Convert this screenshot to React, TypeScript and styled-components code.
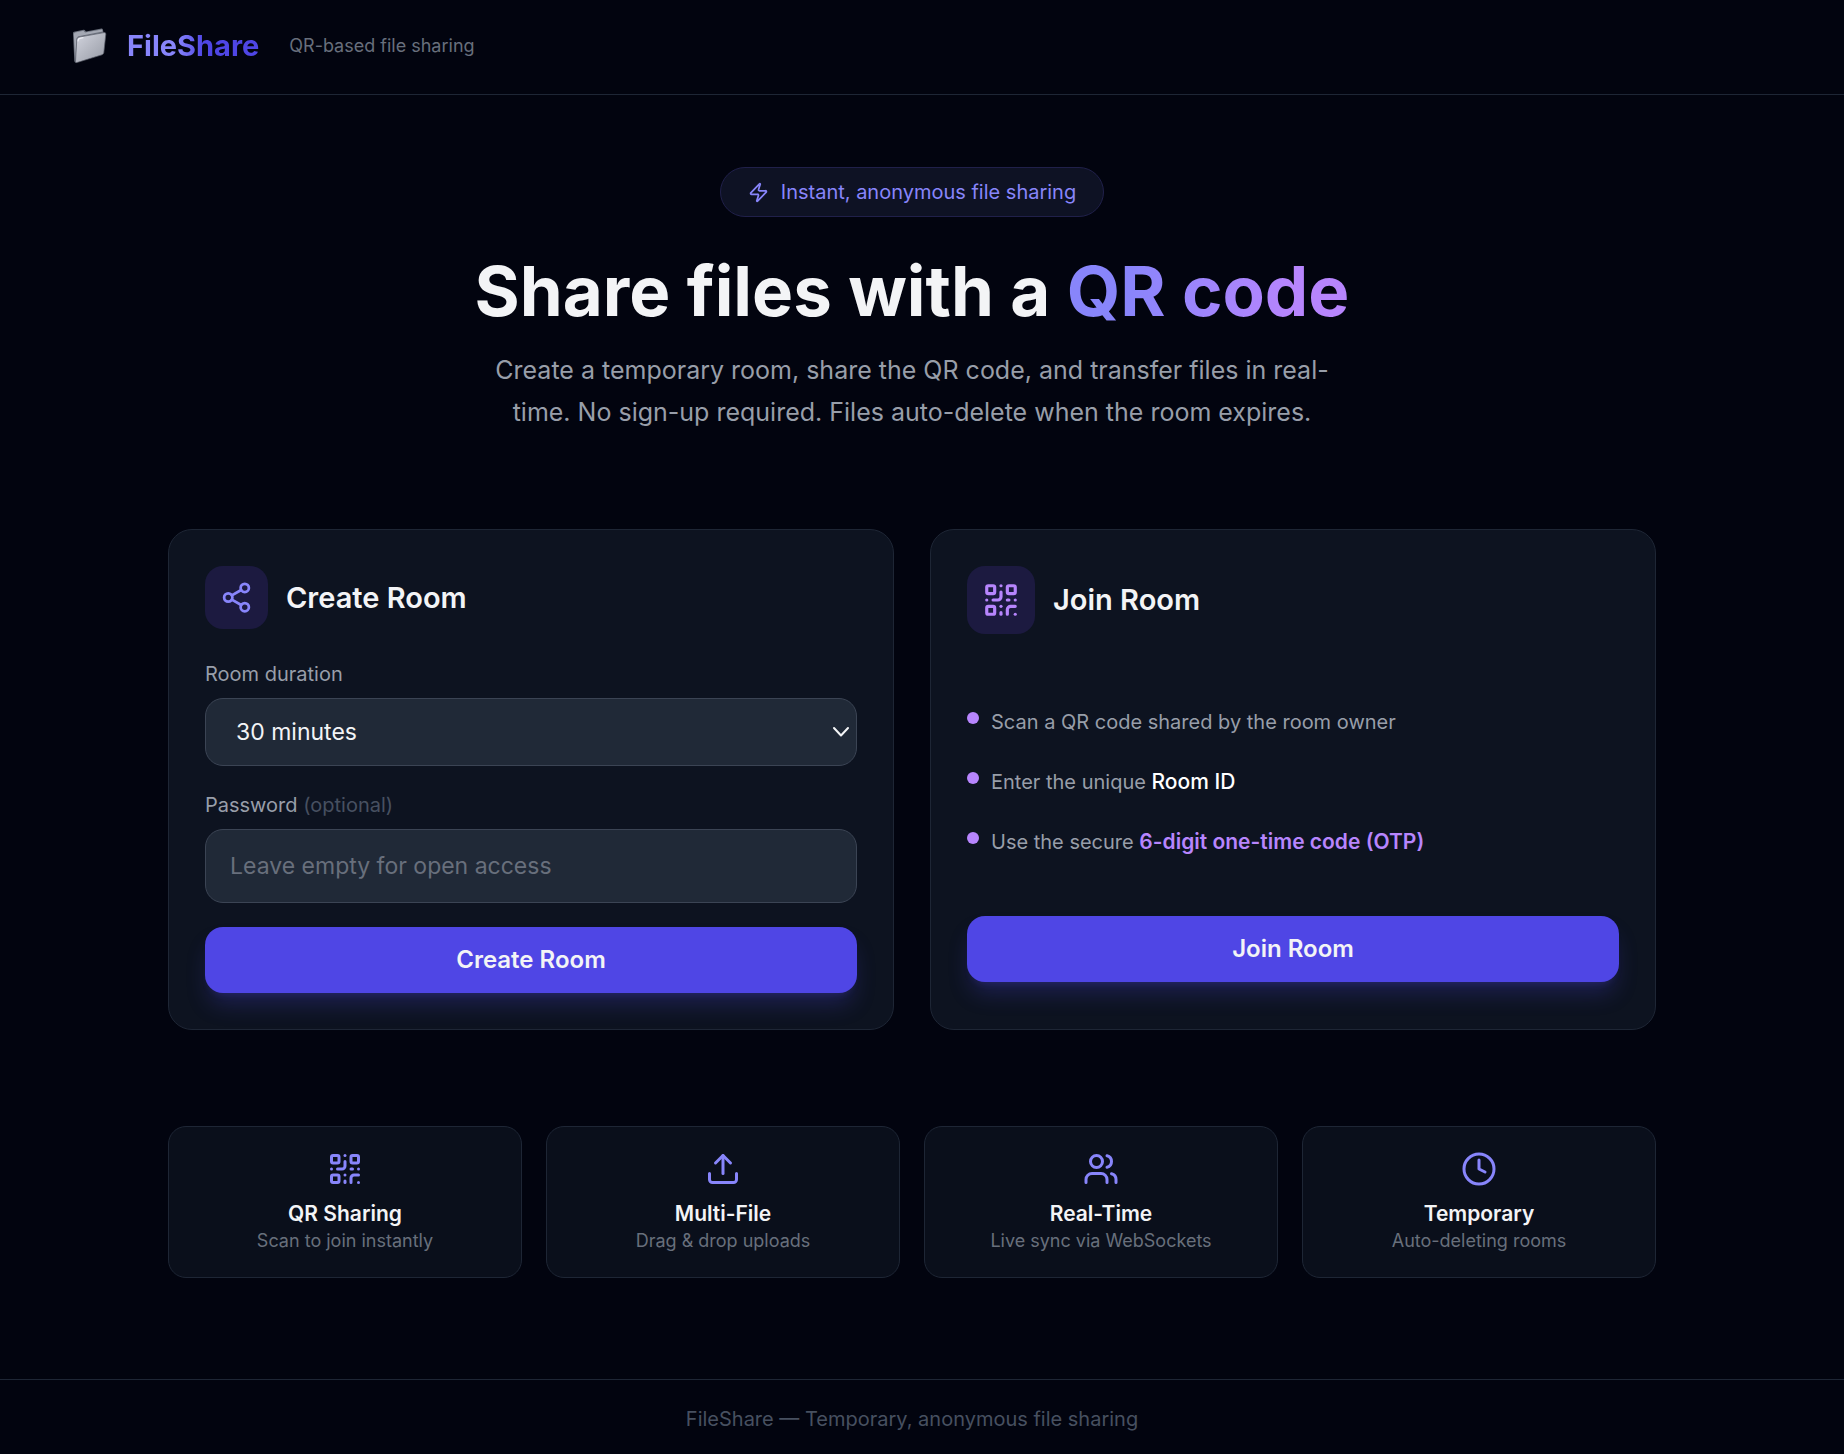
import React from "react";
import styled, { createGlobalStyle } from "styled-components";
import { Clock, QrCode, Share2, Upload, Users, Zap } from "lucide-react";

const color = {
  page: "#02040f",
  card: "#0d1320",
  line: "#1e2635",
  field: "#202937",
  fieldLine: "#3b4454",
  text: "#f3f4f6",
  muted: "#989ea9",
  dim: "#686f7c",
  faint: "#475060",
  indigo: "#8885fb",
  purple: "#b785fd",
  primary: "#4f46e5",
  tint: "#1c1a40",
};

const GlobalStyle = createGlobalStyle`
  *, *::before, *::after { box-sizing: border-box; }
  body {
    margin: 0;
    background: ${color.page};
    color: ${color.text};
    font-family: Inter, "Liberation Sans", sans-serif;
    font-size: 20px;
    line-height: 30px;
  }
  h1, h2, h3, p, ul { margin: 0; padding: 0; }
  button, input, select { font: inherit; }
`;

const Page = styled.div`
  min-height: 100vh;
  display: flex;
  flex-direction: column;
`;

const Header = styled.header`
  display: flex;
  align-items: center;
  padding: 24px 72px 26px;
  border-bottom: 1px solid ${color.line};
`;

const Brand = styled.a`
  display: flex;
  align-items: center;
  gap: 20px;
  color: inherit;
  text-decoration: none;
`;

const BrandName = styled.span`
  font-size: 29px;
  line-height: 44px;
  font-weight: 700;
  background: linear-gradient(to right, ${color.indigo} 38%, ${color.primary} 58%);
  background-clip: text;
  color: transparent;
`;

const Tagline = styled.span`
  margin-left: 30px;
  font-size: 18px;
  color: ${color.dim};
`;

const Main = styled.main`
  flex: 1;
  width: 100%;
  padding: 72px 44px 96px 24px;
`;

const Hero = styled.section`
  display: flex;
  flex-direction: column;
  align-items: center;
  text-align: center;
`;

const Badge = styled.div`
  display: flex;
  align-items: center;
  gap: 12px;
  height: 50px;
  padding: 0 27px;
  border: 1px solid #20204a;
  border-radius: 25px;
  background: #0e1224;
  color: ${color.indigo};
`;

const Headline = styled.h1`
  margin-top: 36px;
  font-size: 69px;
  line-height: 76px;
  font-weight: 700;
`;

const Accent = styled.span`
  background: linear-gradient(to right, ${color.indigo} 20%, ${color.purple} 80%);
  background-clip: text;
  color: transparent;
`;

const Lead = styled.p`
  margin-top: 20px;
  max-width: 864px;
  font-size: 25px;
  line-height: 42px;
  color: ${color.muted};
`;

const Container = styled.div`
  max-width: 1488px;
  margin: 96px auto 0;
`;

const Cards = styled.div`
  display: grid;
  grid-template-columns: repeat(auto-fit, minmax(420px, 1fr));
  gap: 36px;
`;

const Card = styled.section`
  padding: 36px;
  border: 1px solid ${color.line};
  border-radius: 24px;
  background: ${color.card};
`;

const CardHead = styled.div`
  display: flex;
  align-items: center;
  gap: 18px;
`;

const IconTile = styled.div<{ $tone: string }>`
  display: flex;
  padding: 15px;
  border-radius: 18px;
  background: ${color.tint};
  color: ${(p) => p.$tone};
`;

const CardTitle = styled.h2`
  font-size: 29px;
  line-height: 44px;
  font-weight: 600;
`;

const Form = styled.form`
  display: flex;
  flex-direction: column;
  gap: 24px;
  margin-top: 30px;
`;

const Field = styled.div`
  display: flex;
  flex-direction: column;
  gap: 9px;
`;

const Label = styled.label`
  color: ${color.muted};
`;

const Optional = styled.span`
  color: ${color.faint};
`;

const SelectWrap = styled.div`
  position: relative;

  svg {
    position: absolute;
    right: 8px;
    top: 0;
    height: 100%;
    pointer-events: none;
  }
`;

const Select = styled.select`
  display: block;
  appearance: none;
  width: 100%;
  height: 68px;
  padding: 0 30px;
  border: 1px solid ${color.fieldLine};
  border-radius: 18px;
  background: ${color.field};
  color: ${color.text};
  font-size: 23px;
`;

const Input = styled.input`
  width: 100%;
  height: 74px;
  padding: 0 24px;
  border: 1px solid ${color.fieldLine};
  border-radius: 18px;
  background: ${color.field};
  color: ${color.text};
  font-size: 23px;

  &::placeholder {
    color: ${color.dim};
    opacity: 1;
  }
`;

const PrimaryButton = styled.button`
  width: 100%;
  height: 66px;
  border: 0;
  border-radius: 18px;
  background: ${color.primary};
  color: ${color.text};
  font-size: 24px;
  font-weight: 600;
  cursor: pointer;
  box-shadow:
    0 15px 22px -4px rgba(79, 70, 229, 0.25),
    0 6px 9px -6px rgba(79, 70, 229, 0.25);
`;

const Steps = styled.ul`
  display: flex;
  flex-direction: column;
  gap: 30px;
  margin: 73px 0 59px;
  list-style: none;
  color: ${color.muted};
`;

const Step = styled.li`
  display: flex;
  align-items: flex-start;
  gap: 12px;

  &::before {
    content: "";
    flex: none;
    width: 12px;
    height: 12px;
    margin-top: 5px;
    border-radius: 50%;
    background: ${color.purple};
  }
`;

const Strong = styled.strong<{ $tone: string; $weight: number }>`
  color: ${(p) => p.$tone};
  font-size: 21px;
  font-weight: ${(p) => p.$weight};
`;

const Features = styled.div`
  display: grid;
  grid-template-columns: repeat(auto-fit, minmax(260px, 1fr));
  gap: 24px;
  margin-top: 96px;
`;

const Feature = styled.article`
  display: flex;
  flex-direction: column;
  align-items: center;
  padding: 24px;
  border: 1px solid ${color.line};
  border-radius: 18px;
  background: #0a0f1b;
  text-align: center;

  svg {
    color: ${color.indigo};
  }
`;

const FeatureTitle = styled.h3`
  margin-top: 12px;
  font-size: 21px;
  line-height: 30px;
  font-weight: 600;
`;

const FeatureText = styled.p`
  font-size: 18px;
  line-height: 24px;
  color: ${color.dim};
`;

const Footer = styled.footer`
  padding: 24px 44px 20px 24px;
  border-top: 1px solid ${color.line};
  text-align: center;
  color: ${color.faint};
`;

const FolderIcon = () => (
  <svg width="35" height="36" viewBox="0 0 35 36" aria-hidden="true">
    <defs>
      <linearGradient id="folderFront" x1="0" y1="0" x2="1" y2="1">
        <stop offset="0" stopColor="#d3d5df" />
        <stop offset="0.5" stopColor="#b4b7c1" />
        <stop offset="1" stopColor="#969aa5" />
      </linearGradient>
    </defs>
    <path d="M1 5Q1 4 2 3.700L11.500 1.700Q13 1.500 13.500 3L14 3.500 29.500.5Q31 .3 31 2L31.500 4.500 30 25.500 4 34.500Q2.500 34.500 2.300 33Z" fill="#6b707c" />
    <path d="M1.800 5.800 3 4.600l8.500-1.800 1.500 1.600 17-3 .6 2.200L6.500 8.300Q4.600 8.700 4.500 11L3.200 31Z" fill="#a4a8b3" />
    <path d="M4.800 11.500Q5 9.500 7 9.100L32.200 4.600Q34 4.400 33.800 6.200L31.800 24.600Q31.600 26.200 30 26.800L4.800 34.600Q3.300 34.900 3.500 33.200Z" fill="url(#folderFront)" stroke="#5b606c" strokeWidth="0.700" />
    <path d="M6 13Q6.100 10.600 8.200 10.200L11 9.700" fill="none" stroke="#f1f2f7" strokeWidth="1.100" strokeLinecap="round" />
  </svg>
);

const features = [
  { icon: QrCode, title: "QR Sharing", text: "Scan to join instantly" },
  { icon: Upload, title: "Multi-File", text: "Drag & drop uploads" },
  { icon: Users, title: "Real-Time", text: "Live sync via WebSockets" },
  { icon: Clock, title: "Temporary", text: "Auto-deleting rooms" },
];

export default function App() {
  return (
    <Page>
      <GlobalStyle />
      <Header>
        <Brand href="#">
          <FolderIcon />
          <BrandName>FileShare</BrandName>
        </Brand>
        <Tagline>QR-based file sharing</Tagline>
      </Header>

      <Main>
        <Hero>
          <Badge>
            <Zap size={21} />
            <span>Instant, anonymous file sharing</span>
          </Badge>
          <Headline>
            Share files with a <Accent>QR code</Accent>
          </Headline>
          <Lead>
            Create a temporary room, share the QR code, and transfer files in real-time. No sign-up
            required. Files auto-delete when the room expires.
          </Lead>
        </Hero>

        <Container>
          <Cards>
            <Card>
              <CardHead>
                <IconTile $tone={color.indigo}>
                  <Share2 size={33} />
                </IconTile>
                <CardTitle>Create Room</CardTitle>
              </CardHead>
              <Form onSubmit={(e) => e.preventDefault()}>
                <Field>
                  <Label htmlFor="duration">Room duration</Label>
                  <SelectWrap>
                    <Select id="duration" defaultValue="30">
                      <option value="30">30 minutes</option>
                      <option value="60">1 hour</option>
                      <option value="180">3 hours</option>
                    </Select>
                    <svg width="16" viewBox="0 0 16 10" fill="none" stroke="#f3f4f6" strokeWidth="2" strokeLinecap="round" strokeLinejoin="round" aria-hidden="true">
                      <path d="m1 1 7 7.500L15 1" />
                    </svg>
                  </SelectWrap>
                </Field>
                <Field>
                  <Label htmlFor="password">
                    Password <Optional>(optional)</Optional>
                  </Label>
                  <Input id="password" type="password" placeholder="Leave empty for open access" />
                </Field>
                <PrimaryButton type="submit">Create Room</PrimaryButton>
              </Form>
            </Card>

            <Card>
              <CardHead>
                <IconTile $tone={color.purple}>
                  <QrCode size={38} />
                </IconTile>
                <CardTitle>Join Room</CardTitle>
              </CardHead>
              <Steps>
                <Step>
                  <span>Scan a QR code shared by the room owner</span>
                </Step>
                <Step>
                  <span>
                    Enter the unique <Strong $tone="#ffffff" $weight={500}>Room ID</Strong>
                  </span>
                </Step>
                <Step>
                  <span>
                    Use the secure{" "}
                    <Strong $tone={color.purple} $weight={600}>6-digit one-time code (OTP)</Strong>
                  </span>
                </Step>
              </Steps>
              <PrimaryButton type="button">Join Room</PrimaryButton>
            </Card>
          </Cards>

          <Features>
            {features.map(({ icon: Icon, title, text }) => (
              <Feature key={title}>
                <Icon size={36} />
                <FeatureTitle>{title}</FeatureTitle>
                <FeatureText>{text}</FeatureText>
              </Feature>
            ))}
          </Features>
        </Container>
      </Main>

      <Footer>FileShare — Temporary, anonymous file sharing</Footer>
    </Page>
  );
}
